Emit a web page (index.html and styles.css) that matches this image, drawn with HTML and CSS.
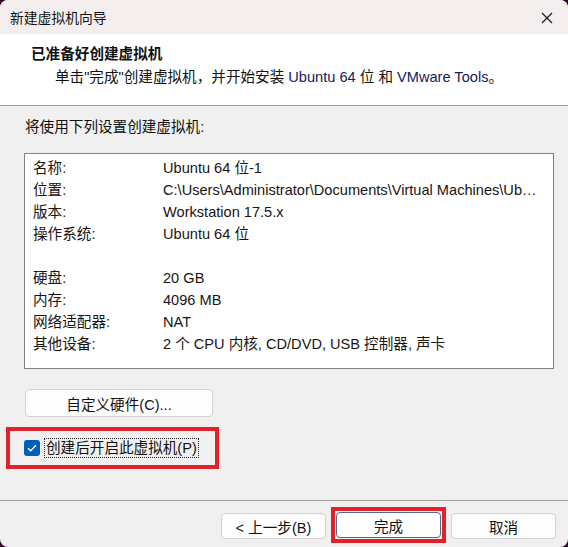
FILE: index.html
```html
<!DOCTYPE html>
<html lang="zh-CN">

<head>
    <meta charset="UTF-8">
    <meta name="viewport" content="width=device-width, initial-scale=1.0">
    <title>新建虚拟机向导</title>
    <link rel="stylesheet" href="styles.css">
</head>

<body>
    <div class="window">
        <div class="titlebar">
            <span class="title">新建虚拟机向导</span>
            <svg class="close" width="12" height="12" viewBox="0 0 12 12">
                <path d="M1 1 L11 11 M11 1 L1 11" stroke="#1a1a1a" stroke-width="1.2" fill="none"/>
            </svg>
        </div>

        <div class="header">
            <div class="heading">已准备好创建虚拟机</div>
            <div class="subheading">单击"完成"创建虚拟机，并开始安装 <span class="latin">Ubuntu 64</span> 位 和 <span class="latin">VMware Tools</span>。</div>
        </div>

        <div class="content">
            <div class="intro">将使用下列设置创建虚拟机:</div>

            <div class="summary">
                <div class="row"><span class="label">名称:</span><span class="value">Ubuntu 64 位-1</span></div>
                <div class="row"><span class="label">位置:</span><span class="value">C:\Users\Administrator\Documents\Virtual Machines\Ubuntu 64 位-1</span></div>
                <div class="row"><span class="label">版本:</span><span class="value">Workstation 17.5.x</span></div>
                <div class="row"><span class="label">操作系统:</span><span class="value">Ubuntu 64 位</span></div>
                <div class="row"></div>
                <div class="row"><span class="label">硬盘:</span><span class="value">20 GB</span></div>
                <div class="row"><span class="label">内存:</span><span class="value">4096 MB</span></div>
                <div class="row"><span class="label">网络适配器:</span><span class="value">NAT</span></div>
                <div class="row"><span class="label">其他设备:</span><span class="value">2 个 CPU 内核, CD/DVD, USB 控制器, 声卡</span></div>
            </div>

            <button class="btn custom">自定义硬件(C)...</button>

            <label class="launch">
                <span class="checkbox">
                    <svg width="10" height="8" viewBox="0 0 10 8">
                        <path d="M1 4.2 L3.7 6.8 L9 1.2" stroke="#fff" stroke-width="1.3" fill="none"/>
                    </svg>
                </span>
                <span class="launch-text">创建后开启此虚拟机(P)</span>
            </label>
        </div>

        <div class="footer">
            <button class="btn">&lt; 上一步(B)</button>
            <span class="mark"><button class="btn primary">完成</button></span>
            <button class="btn">取消</button>
        </div>
    </div>
</body>

</html>
```

FILE: styles.css
```css
body {
    margin: 0;
    background-color: #2e0a28;
    font-family: "Liberation Sans", "Noto Sans CJK SC", sans-serif;
    font-size: 14.6px;
    color: #111;
}

.window {
    width: 568px;
    height: 547px;
    display: flex;
    flex-direction: column;
    background-color: #f0f0f0;
    border-radius: 8px;
    overflow: hidden;
}

.titlebar {
    height: 34px;
    flex: none;
    display: flex;
    align-items: center;
    justify-content: space-between;
    padding: 0 15px 0 10px;
    background-color: #f4eeee;
    font-size: 13.8px;
}

.close {
    margin-top: 1px;
}

.header {
    height: 72px;
    flex: none;
    box-sizing: border-box;
    padding: 10px 0 0 31px;
    background-color: #fff;
    border-bottom: 1px solid #a0a0a0;
}

.heading {
    font-size: 14.6px;
    font-weight: bold;
    line-height: 20px;
}

.subheading {
    margin-top: 3px;
    padding-left: 24px;
    line-height: 20px;
}

.latin {
    color: #14205a;
}

.content {
    padding: 11px 14px 0 24px;
}

.intro {
    line-height: 20px;
    padding-left: 1px;
}

.summary {
    margin-top: 16px;
    height: 216px;
    box-sizing: border-box;
    padding: 3px 12px 0 8px;
    background-color: #fff;
    border: 1px solid #828282;
}

.row {
    display: flex;
    height: 22px;
    line-height: 22px;
    color: #1a1410;
}

.label {
    width: 130px;
    flex: none;
}

.value {
    white-space: nowrap;
    overflow: hidden;
    text-overflow: ellipsis;
}

.btn {
    height: 26px;
    padding: 0;
    font-family: inherit;
    font-size: 14.6px;
    color: #111;
    background-color: #fdfdfd;
    border: 1px solid #d2d2d2;
    border-radius: 4px;
}

.custom {
    margin-top: 20px;
    width: 188px;
    height: 28px;
    margin-left: 1px;
    display: block;
}

.launch {
    margin: 14px 0 0 -14px;
    width: 205px;
    height: 34px;
    box-sizing: border-box;
    padding-left: 14px;
    display: flex;
    align-items: center;
    gap: 4px;
    outline: 4px solid #e3212a;
}

.checkbox {
    width: 16px;
    height: 16px;
    flex: none;
    display: flex;
    align-items: center;
    justify-content: center;
    background-color: #005fb8;
    border-radius: 3px;
}

.launch-text {
    border: 1px dotted #222;
    line-height: 18px;
    padding: 0 1px;
}

.footer {
    margin-top: auto;
    height: 47px;
    flex: none;
    box-sizing: border-box;
    border-top: 1px solid #a0a0a0;
    display: flex;
    align-items: flex-start;
    justify-content: flex-end;
    gap: 10px;
    padding: 12px 12px 0 0;
}

.footer .btn {
    width: 105px;
}

/* red frame drawn round the finish button */
.mark {
    display: flex;
    margin: -6px -5px 0;
    padding: 1px;
    border: 4px solid #e3212a;
}

.primary {
    border-color: #4d6a94;
    background-color: #fff;
}
```
